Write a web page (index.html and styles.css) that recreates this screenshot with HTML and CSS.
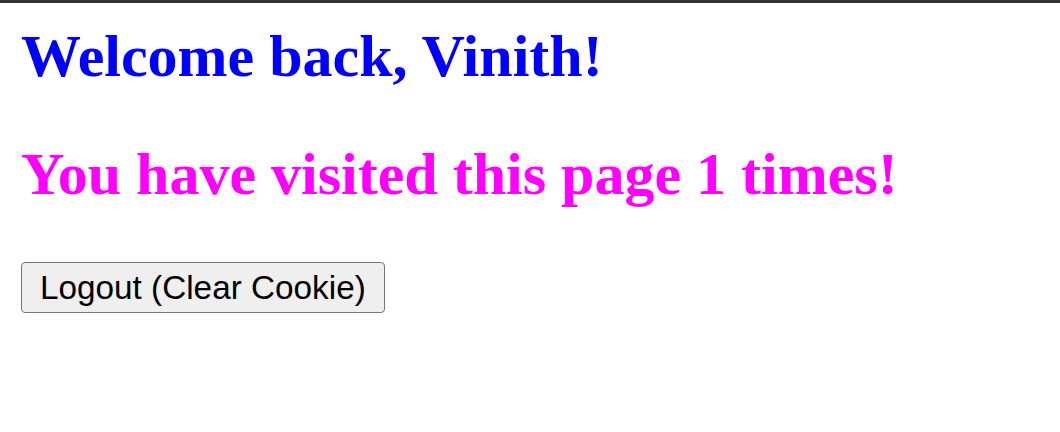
FILE: index.html
```html
<!DOCTYPE html>
<html>
<head>
<meta charset="utf-8">
<link rel="stylesheet" href="styles.css">
</head>
<body>
<div class="topbar"></div>
<main class="page">
  <h1 class="welcome">Welcome back, Vinith!</h1>
  <h2 class="visits">You have visited this page 1 times!</h2>
  <div class="actions">
    <button class="logout" type="button">Logout (Clear Cookie)</button>
  </div>
</main>
</body>
</html>
```
FILE: styles.css
```css
html, body {
  margin: 0;
  padding: 0;
  background: #ffffff;
}
.topbar {
  height: 3px;
  background: #333333;
}
.page {
  display: flex;
  flex-direction: column;
  align-items: flex-start;
  padding: 19px 21px 0 21px;
}
.welcome, .visits {
  margin: 0;
  font-family: "Liberation Serif", "Times New Roman", serif;
  font-weight: bold;
  font-size: 60px;
  line-height: 68px;
}
.welcome {
  color: #0000ff;
}
.visits {
  color: #ff00ff;
  margin-top: 50px;
}
.actions {
  margin-top: 54px;
}
.logout {
  font-family: "Liberation Sans", Arial, sans-serif;
  font-size: 33.3px;
  line-height: 37px;
  padding: 6px 18px;
  color: #000000;
  background: #efefef;
  border: 1px solid #767676;
  border-radius: 4px;
}
```
